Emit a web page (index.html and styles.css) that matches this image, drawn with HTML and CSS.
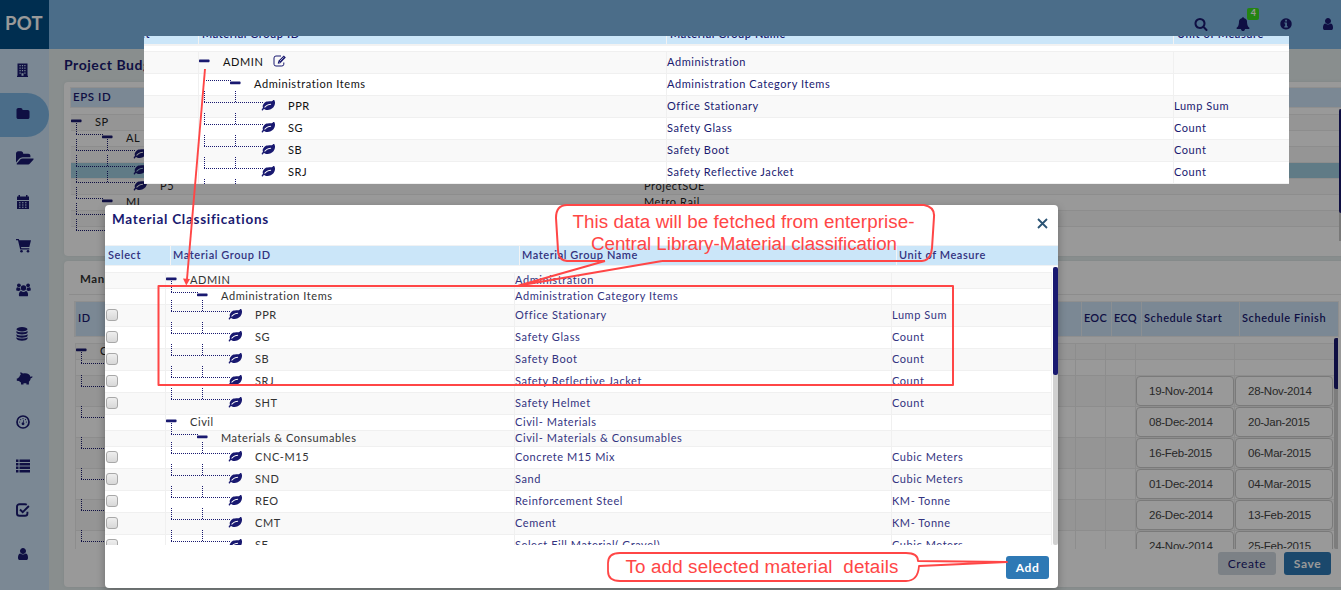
FILE: index.html
```html
<!DOCTYPE html>
<html lang="en">
<head>
<meta charset="utf-8">
<title>Project Budget</title>
<link rel="stylesheet" href="styles.css">
</head>
<body>
<svg class="defs" width="0" height="0">
  <symbol id="leafshape" viewBox="0 0 1792 1792"><path d="M1280 704q0-26-19-45t-45-19q-172 0-318 49.5t-259.500 134-235.500 219.5q-19 21-19 45 0 26 19 45t45 19q24 0 45-19 27-24 74-71t67-66q137-124 268.500-176t313.500-52q26 0 45-19t19-45zm512-198q0 95-20 193-46 224-184.500 383t-357.500 268q-214 108-438 108-148 0-286-47-15-5-88-42t-96-37q-16 0-39.500 32t-45 70-52.500 70-60 32q-43 0-63.500-17.500t-45.500-59.500q-2-4-6-11t-5.500-10-3-9.500-1.500-13.500q0-35 31-73.500t68-65.500 68-56 31-48q0-4-14-38t-16-44q-9-51-9-104 0-115 43.500-220t119-184.500 170.500-139 204-95.500q55-18 145-25.500t179.500-9 178.500-6 163.500-24 113.500-56.500l29.500-29.500 29.500-28 27-20 36.500-16 43.500-4.500q39 0 70.500 46t47.500 112 24 124 8 96z"/></symbol>
  <symbol id="l1" viewBox="0 0 80 22"><rect x="0" y="12.600" width="10.500" height="2.600" rx=".6"/></symbol>
  <symbol id="l2" viewBox="0 0 80 22"><path class="dots" d="M5.500 0V12M5 11.500H32"/><rect x="31" y="12.600" width="10.500" height="2.600" rx=".6"/></symbol>
  <symbol id="l3" viewBox="0 0 80 22"><path class="dots" d="M5.500 0V12M36.500 0V12M5 11.500H64"/><use href="#leafshape" x="62.500" y="8" width="13.500" height="13.500"/></symbol>
  <symbol id="l0" viewBox="0 0 80 22"><path class="dots" d="M5.500 0V12M5 11.500H80"/></symbol>
  <symbol id="user" viewBox="0 0 1792 1792"><path d="M1536 1399q0 109-62.500 187t-150.500 78h-854q-88 0-150.500-78t-62.500-187q0-85 8.500-160.500t31.500-152 58.500-131 94-89 134.500-34.500q131 128 313 128t313-128q76 0 134.500 34.500t94 89 58.500 131 31.500 152 8.500 160.500zm-256-887q0 159-112.500 271.500t-271.500 112.500-271.500-112.500-112.500-271.500 112.500-271.500 271.500-112.500 271.500 112.500 112.500 271.500z"/></symbol>
</svg>

<div class="app">
  <aside class="sidebar">
    <div class="logo">POT</div>
    <nav class="nav">
      <a class="item"><svg width="14" height="14" viewBox="0 0 14 14"><path fill-rule="evenodd" d="M1.500 .5h10v12.200h.5V14H1v-1.300h.5zM3.500 2v1.200h1.200V2zm2.400 0v1.200h1.200V2zm2.400 0v1.200h1.200V2zM3.500 4.500v1.200h1.200V4.500zm2.400 0v1.200h1.200V4.500zm2.400 0v1.200h1.200V4.500zM3.500 7v1.200h1.200V7zm2.400 0v1.200h1.200V7zm2.400 0v1.200h1.200V7zM3.500 9.500v1.200h1.200V9.500zm4.800 0v1.200h1.200V9.500zM5.500 10.200v2.500h2v-2.500z"/></svg></a>
      <a class="item active"><svg width="14" height="14" viewBox="0 0 1792 1792"><path d="M1728 608v704q0 92-66 158t-158 66h-1216q-92 0-158-66t-66-158v-960q0-92 66-158t158-66h320q92 0 158 66t66 158v32h672q92 0 158 66t66 158z"/></svg></a>
      <a class="item wide"><svg width="18" height="17" viewBox="0 0 1920 1792"><path d="M1879 952q0 31-31 66l-336 396q-43 51-120.500 86.500t-143.500 35.500h-1088q-34 0-60.500-13t-26.500-43q0-31 31-66l336-396q43-51 120.500-86.500t143.500-35.500h1088q34 0 60.500 13t26.500 43zm-343-344v160h-832q-94 0-197 47.500t-164 119.500l-337 396-5 6q0-4-.500-12.500t-.500-12.500v-960q0-92 66-158t158-66h320q92 0 158 66t66 158v32h544q92 0 158 66t66 158z"/></svg></a>
      <a class="item"><svg width="14" height="15" viewBox="0 0 14 15"><path fill-rule="evenodd" d="M1 1.500h1.500V0H4v1.500h6V0h1.500v1.500H13V5H1zM1 6h12v8H1zm2 1.300v1h1.500v-1zm3 0v1h1.500v-1zm3 0v1h1.500v-1zM3 9.500v1h1.500v-1zm3 0v1h1.500v-1zm3 0v1h1.500v-1zM3 11.700v1h1.500v-1zm3 0v1h1.500v-1zm3 0v1h1.500v-1z"/></svg></a>
      <a class="item"><svg width="15" height="14" viewBox="0 0 15 14"><path d="M0 0h2.800l.5 1.300H15L13.300 8H5l.3 1.200h8v1.300H4.200L2 1.300H0z"/><circle cx="5.500" cy="12.300" r="1.300"/><circle cx="12" cy="12.300" r="1.300"/></svg></a>
      <a class="item"><svg width="15" height="14" viewBox="0 0 15 14"><circle cx="7.500" cy="5" r="2.700"/><circle cx="2.900" cy="2.300" r="1.900"/><circle cx="12.100" cy="2.300" r="1.900"/><path d="M3.200 13.200c-.8-2 .2-5 1.900-5.200 1.500 1.200 3.300 1.200 4.800 0 1.700.2 2.700 3.200 1.900 5.200zM.3 7.500C0 5.500.5 4.300 1.500 4.200c.8.500 1.500.6 2.500.3 0 1 .2 1.700.7 2.400L2.800 8zM14.700 7.500c.3-2-.2-3.200-1.200-3.300-.8.500-1.500.6-2.500.3 0 1-.2 1.700-.7 2.400L12.200 8z"/></svg></a>
      <a class="item"><svg width="12" height="14" viewBox="0 0 12 14"><ellipse cx="6" cy="2.300" rx="5.500" ry="2.200"/><path d="M.5 3.700c1 2 10 2 11 0v2c-1 2.300-10 2.300-11 0zM.5 6.900c1 2 10 2 11 0v2c-1 2.300-10 2.300-11 0zM.5 10.100c1 2 10 2 11 0v1.700c-1 2.600-10 2.600-11 0z"/></svg></a>
      <a class="item"><svg width="17" height="13" viewBox="0 0 17 13"><path d="M1.500 6.500L3.300 5C3.600 4 4.300 3 4.800 2.500L4 .5C5.500.5 6.500 1 7 1.600 11 .7 14 2.500 14.600 5c.9.200 1-.8 1.700-.6.600.5-.3 1.700-1.600 1.800-.1 1.600-.8 2.600-1.800 3.500V12.600h-2.500v-1.400H7.500v1.400H5V10.500C4.200 10 3.500 9.500 3 9L.8 8.700V6.500z"/></svg></a>
      <a class="item"><svg width="14" height="14" viewBox="0 0 14 14"><circle cx="7" cy="7" r="6" fill="none" stroke="#191970" stroke-width="1.700"/><circle cx="7" cy="8.800" r="1.400"/><path d="M6.500 8.500L7.400 4.800l.5.200-.4 3.700z"/><circle cx="3.600" cy="7" r=".6"/><circle cx="4.700" cy="4.600" r=".6"/><circle cx="7" cy="3.600" r=".6"/><circle cx="9.500" cy="4.600" r=".6"/><circle cx="10.400" cy="7" r=".6"/></svg></a>
      <a class="item"><svg width="14" height="14" viewBox="0 0 14 14"><path d="M0 .5h2.500V3H0zM3.500.5H14V3H3.500zM0 4h2.500v2.500H0zM3.500 4H14v2.500H3.500zM0 7.500h2.500V10H0zM3.500 7.500H14V10H3.500zM0 11h2.500v2.500H0zM3.500 11H14v2.500H3.500z"/></svg></a>
      <a class="item"><svg width="14" height="14" viewBox="0 0 14 14"><path d="M10.800 1.700C10.300 1.400 9.800 1.200 9 1.200H3.500C2 1.200 1 2.200 1 3.500v7C1 12 2 12.800 3.500 12.800H9c1.500 0 2.400-.8 2.400-2.300V8.800M4 6.500l2.700 2.700L12.900 3" fill="none" stroke="#191970" stroke-width="1.900"/></svg></a>
      <a class="item"><svg width="14" height="14"><use href="#user"/></svg></a>
    </nav>
  </aside>

  <div class="body">
    <header class="topbar">
      <svg class="ic search" width="14" height="14" viewBox="0 0 1792 1792"><path d="M1216 832q0-185-131.500-316.500t-316.500-131.500-316.500 131.500-131.500 316.500 131.500 316.500 316.500 131.500 316.500-131.500 131.500-316.500zm512 832q0 52-38 90t-90 38q-54 0-90-38l-343-342q-179 124-399 124-143 0-273.500-55.500t-225-150-150-225-55.500-273.500 55.500-273.500 150-225 225-150 273.500-55.500 273.500 55.500 225 150 150 225 55.500 273.500q0 220-124 399l343 343q37 37 37 90z"/></svg>
      <span class="bell"><svg class="ic" width="14" height="14" viewBox="0 0 1792 1792"><path d="M1728 1408q0 52-38 90t-90 38h-448q0 106-75 181t-181 75-181-75-75-181h-448q-52 0-90-38t-38-90q50-42 91-88t85-119.500 74.500-158.500 50-206 19.500-260q0-152 117-282.500t307-158.500q-8-19-8-39 0-40 28-68t68-28 68 28 28 68q0 20-8 39 190 28 307 158.500t117 282.500q0 139 19.500 260t50 206 74.500 158.500 85 119.500 91 88z"/></svg><b class="badge">4</b></span>
      <svg class="ic" width="14" height="14" viewBox="0 0 14 14"><path fill-rule="evenodd" d="M7 1.200a5.700 5.700 0 1 0 .01 0zM6.200 2.800h1.700v1.600H6.200zM5.300 5.400h2.600v3.800h.9v1.300H5.300V9.200h.9V6.600h-.9z"/></svg>
      <svg class="ic" width="14" height="14"><use href="#user"/></svg>
    </header>

    <main class="main">
      <h1 class="title">Project Budget</h1>
      <section class="panel eps">
        <div class="ephead">EPS ID</div>
        <div class="eprows">
          <div class="er alt"><div class="tree"><svg><use href="#l1"/></svg><span class="t1">SP</span></div><div class="c"></div></div>
          <div class="er"><div class="tree"><svg><use href="#l2"/></svg><span class="t2">AL</span></div><div class="c"></div></div>
          <div class="er alt"><div class="tree"><svg><use href="#l3"/></svg></div><div class="c"></div></div>
          <div class="er sel"><div class="tree"><svg><use href="#l3"/></svg></div><div class="c"></div></div>
          <div class="er alt"><div class="tree"><svg><use href="#l3"/></svg><span class="t3">P5</span></div><div class="c">ProjectSOE</div></div>
          <div class="er"><div class="tree"><svg><use href="#l2"/></svg><span class="t2">ML</span></div><div class="c">Metro Rail</div></div>
          <div class="er alt"><div class="tree"><svg><use href="#l0"/></svg></div><div class="c"></div></div>
          <div class="er last"><div class="tree"><svg><use href="#l0"/></svg></div><div class="c"></div></div>
        </div>
        <div class="epscroll"><i></i></div>
      </section>

      <section class="panel man">
        <h2 class="tab">Manpower</h2>
        <div class="mtable">
          <div class="mhead"><span>ID</span><span>EOC</span><span>ECQ</span><span>Schedule Start</span><span>Schedule Finish</span></div>
          <div class="mwrap">
            <div class="mrows">
              <div class="mr short alt"><div class="tree"><svg><use href="#l1"/></svg><span class="t1">Civil</span></div><div></div><div></div><div></div><div></div></div>
              <div class="mr short"><div class="tree"><svg><use href="#l0"/></svg></div><div></div><div></div><div></div><div></div></div>
              <div class="mr alt"><div class="tree"><svg><use href="#l0"/></svg></div><div></div><div></div><div><span class="date">19-Nov-2014</span></div><div><span class="date">28-Nov-2014</span></div></div>
              <div class="mr"><div class="tree"><svg><use href="#l0"/></svg></div><div></div><div></div><div><span class="date">08-Dec-2014</span></div><div><span class="date">20-Jan-2015</span></div></div>
              <div class="mr alt"><div class="tree"><svg><use href="#l0"/></svg></div><div></div><div></div><div><span class="date">16-Feb-2015</span></div><div><span class="date">06-Mar-2015</span></div></div>
              <div class="mr"><div class="tree"><svg><use href="#l0"/></svg></div><div></div><div></div><div><span class="date">01-Dec-2014</span></div><div><span class="date">04-Mar-2015</span></div></div>
              <div class="mr alt"><div class="tree"><svg><use href="#l0"/></svg></div><div></div><div></div><div><span class="date">26-Dec-2014</span></div><div><span class="date">13-Feb-2015</span></div></div>
              <div class="mr"><div class="tree"><svg><use href="#l0"/></svg></div><div></div><div></div><div><span class="date">24-Nov-2014</span></div><div><span class="date">25-Feb-2015</span></div></div>
            </div>
            <div class="scroll m"><i></i></div>
          </div>
        </div>
        <div class="actions"><span class="btn create">Create</span><span class="btn save">Save</span></div>
      </section>
    </main>
  </div>
</div>
<div class="backdrop"></div>

<section class="library">
  <div class="lhead"><span>Select</span><span>Material Group ID</span><span>Material Group Name</span><span>Unit of Measure</span></div>
  <div class="lr alt"><div></div><div class="tree"><svg><use href="#l1"/></svg><span class="t1">ADMIN</span><svg class="edit" viewBox="0 0 13 12"><path d="M8 1H3Q1 1 1 3v6.200q0 1.800 2 1.800h5.800q2 0 2-1.800V7.500" fill="none" stroke="#191970" stroke-width="1"/><path d="M4.800 8.700l.4-2.600L10.800.5l2 2L7.300 8.200z"/><path d="M5.800 6.600l1.200 1.200M7 6l3.700-3.700" stroke="#fff" stroke-width=".6"/></svg></div><div>Administration</div><div></div></div>
  <div class="lr"><div></div><div class="tree"><svg><use href="#l2"/></svg><span class="t2">Administration Items</span></div><div>Administration Category Items</div><div></div></div>
  <div class="lr alt"><div></div><div class="tree"><svg><use href="#l3"/></svg><span class="t3">PPR</span></div><div>Office Stationary</div><div>Lump Sum</div></div>
  <div class="lr"><div></div><div class="tree"><svg><use href="#l3"/></svg><span class="t3">SG</span></div><div>Safety Glass</div><div>Count</div></div>
  <div class="lr alt"><div></div><div class="tree"><svg><use href="#l3"/></svg><span class="t3">SB</span></div><div>Safety Boot</div><div>Count</div></div>
  <div class="lr"><div></div><div class="tree"><svg><use href="#l3"/></svg><span class="t3">SRJ</span></div><div>Safety Reflective Jacket</div><div>Count</div></div>
  <div class="lr"><div></div><div class="tree"><svg><use href="#l3"/></svg></div><div></div><div></div></div>
</section>

<section class="modal">
  <div class="mtitle"><h2>Material Classifications</h2><svg class="close" width="11" height="11" viewBox="0 0 11 11"><path d="M1 1l9 9M10 1L1 10" stroke="#2b5474" stroke-width="1.800"/></svg></div>
  <div class="gh"><span>Select</span><span>Material Group ID</span><span>Material Group Name</span><span>Unit of Measure</span></div>
  <div class="gwrap">
    <div class="grows">
      <div class="gr short alt"><div></div><div class="tree"><svg><use href="#l1"/></svg><span class="t1">ADMIN</span></div><div>Administration</div><div></div></div>
      <div class="gr short"><div></div><div class="tree"><svg><use href="#l2"/></svg><span class="t2">Administration Items</span></div><div>Administration Category Items</div><div></div></div>
      <div class="gr alt"><div><i class="cb"></i></div><div class="tree"><svg><use href="#l3"/></svg><span class="t3">PPR</span></div><div>Office Stationary</div><div>Lump Sum</div></div>
      <div class="gr"><div><i class="cb"></i></div><div class="tree"><svg><use href="#l3"/></svg><span class="t3">SG</span></div><div>Safety Glass</div><div>Count</div></div>
      <div class="gr alt"><div><i class="cb"></i></div><div class="tree"><svg><use href="#l3"/></svg><span class="t3">SB</span></div><div>Safety Boot</div><div>Count</div></div>
      <div class="gr"><div><i class="cb"></i></div><div class="tree"><svg><use href="#l3"/></svg><span class="t3">SRJ</span></div><div>Safety Reflective Jacket</div><div>Count</div></div>
      <div class="gr alt"><div><i class="cb"></i></div><div class="tree"><svg><use href="#l3"/></svg><span class="t3">SHT</span></div><div>Safety Helmet</div><div>Count</div></div>
      <div class="gr short"><div></div><div class="tree"><svg><use href="#l1"/></svg><span class="t1">Civil</span></div><div>Civil- Materials</div><div></div></div>
      <div class="gr short alt"><div></div><div class="tree"><svg><use href="#l2"/></svg><span class="t2">Materials &amp; Consumables</span></div><div>Civil- Materials &amp; Consumables</div><div></div></div>
      <div class="gr"><div><i class="cb"></i></div><div class="tree"><svg><use href="#l3"/></svg><span class="t3">CNC-M15</span></div><div>Concrete M15 Mix</div><div>Cubic Meters</div></div>
      <div class="gr alt"><div><i class="cb"></i></div><div class="tree"><svg><use href="#l3"/></svg><span class="t3">SND</span></div><div>Sand</div><div>Cubic Meters</div></div>
      <div class="gr"><div><i class="cb"></i></div><div class="tree"><svg><use href="#l3"/></svg><span class="t3">REO</span></div><div>Reinforcement Steel</div><div>KM- Tonne</div></div>
      <div class="gr alt"><div><i class="cb"></i></div><div class="tree"><svg><use href="#l3"/></svg><span class="t3">CMT</span></div><div>Cement</div><div>KM- Tonne</div></div>
      <div class="gr"><div><i class="cb"></i></div><div class="tree"><svg><use href="#l3"/></svg><span class="t3">SF</span></div><div>Select Fill Material( Gravel)</div><div>Cubic Meters</div></div>
    </div>
    <div class="scroll"><i></i></div>
  </div>
  <div class="foot"><span class="btn add">Add</span></div>
</section>

<svg class="notes" width="1341" height="590" viewBox="0 0 1341 590">
  <g fill="none" stroke="#ff4646" stroke-width="2" stroke-linejoin="round">
    <path d="M205 69L187 279" stroke-width="1.900"/>
    <path d="M158.500 286H953V385H158.500Z"/>
    <path d="M605 261H567Q558 260 558 250L556 218Q556 205 567 205H924Q935 207 934 217L932 248Q931 260 922 261M662 261H922M605 261L519 285.500L662 261"/>
    <path d="M918 561Q918 553 906 553H620Q608 553 608 563V571Q608 581 620 581H906Q918 581 919 566L1007 562Z" stroke-width="1.800"/>
  </g>
  <path d="M183 278.500L190 279L186.300 285.500Z" fill="#ff4646"/>
  <g class="note">
    <text x="572.500" y="228" textLength="342">This data will be fetched from enterprise-</text>
    <text x="591" y="250" textLength="306">Central Library-Material classification</text>
    <text x="625.500" y="573" textLength="273" xml:space="preserve">To add selected material  details</text>
  </g>
</svg>
</body>
</html>
```
FILE: styles.css
```css
* { box-sizing: border-box; }
body {
  margin: 0;
  width: 1341px;
  height: 590px;
  overflow: hidden;
  position: relative;
  font: 11px/13px Lato, "Open Sans", sans-serif;
  letter-spacing: .57px;
  color: #191970;
  background: #e4eded;
}
svg { fill: #191970; display: block; }
h1, h2 { margin: 0; }
.defs { position: absolute; }
.dots { fill: none; stroke: #191970; stroke-width: 1; stroke-dasharray: 1 1; }

.app { display: flex; height: 590px; overflow: hidden; }
.sidebar { width: 49px; flex: none; background: #cde3f7; }
.logo {
  height: 49px;
  background: #004e85;
  color: #fff;
  font-size: 18.5px;
  font-weight: 700;
  line-height: 46px;
  padding-left: 5px;
  letter-spacing: .3px;
}
.item { display: flex; align-items: center; height: 44px; padding: 0 0 2px 16px; }
.item.active { background: #7db6e4; border-radius: 0 22px 22px 0; }

.body { flex: 1; min-width: 0; }
.topbar {
  height: 49px;
  background: #7db6e4;
  display: flex;
  justify-content: flex-end;
  gap: 28.300px;
  padding: 17px 6px 0 0;
}
.bell { position: relative; height: 14px; }
.badge {
  position: absolute;
  left: 11px;
  top: -9px;
  width: 12px;
  height: 12px;
  border-radius: 2px;
  background: #3cdc1e;
  color: #fff;
  font-size: 9px;
  line-height: 10px;
  text-align: center;
  letter-spacing: 0;
}
.main { padding: 0 0 0 15px; }
.title { height: 33px; font-size: 14px; line-height: 32px; letter-spacing: .55px; }
.panel { background: #fff; border-radius: 4px; width: 1290px; box-shadow: 0 0 3px #d5dede; }
.eps { height: 174px; padding: 6px 0 0 7px; position: relative; }
.ephead { height: 19px; background: #cde3f7; padding-left: 2px; line-height: 18px; font-weight: 600; margin-bottom: 7px; box-shadow: 0 0 0 1px #eee; font-size: 11.500px; }
.er { display: flex; height: 16px; border-top: 1px solid #ececec; background: #fff; }
.er.alt { background: #f8f8f8; }
.er.sel { background: #a0cddf; }
.er.last { height: 28px; background: none; }
.er .tree { width: 573px; }
.er span, .er .c { color: #222; }

.tree { position: relative; }
.tree > svg:first-child { position: absolute; left: 0; top: -8px; width: 80px; height: 22px; }
.t1 { margin-left: 24px; }
.t2 { margin-left: 55px; }
.t3 { margin-left: 89px; }
.epscroll { position: absolute; left: 1275px; top: 27px; width: 5px; height: 132px; background: #c8c8c8; }
.epscroll i { display: block; height: 104px; background: #191970; border-radius: 2px; }

.man { margin-top: 5px; height: 326px; }
.tab { height: 34px; margin-left: 5px; padding-left: 11px; font-size: 11.5px; line-height: 36px; border-bottom: 1px solid #eaeaea; color: #333; }
.mtable { margin: 7px 0 0 11px; width: 1263px; }
.mhead { display: grid; grid-template-columns: 1006px 30px 30px 98px 1fr; height: 34px; line-height: 32px; background: #cde3f7; font-weight: 600; box-shadow: 0 0 0 1px #eee; }
.mhead span { padding-left: 2px; border-left: 1px solid #e8eef4; white-space: nowrap; }
.mhead span:nth-child(2), .mhead span:nth-child(3) { letter-spacing: .2px; }
.mwrap { display: flex; height: 213px; padding-top: 2px; overflow: hidden; }
.mrows { padding-top: 5px; width: 1259px; flex: none; }
.mr { display: grid; grid-template-columns: 1000px 30px 30px 99px 99px; height: 31px; border-top: 1px solid #ececec; background: #fff; }
.mr.short { height: 16px; }
.mr.alt { background: #f8f8f8; }
.mr > div { border-left: 1px solid #ececec; }
.mr .tree > svg { top: -1px; }
.mr.short .tree > svg { top: -8px; }
.mr .t1 { color: #222; }
.date {
  display: block;
  width: 98px;
  height: 30px;
  border: 1px solid #ccc;
  border-radius: 4px;
  background: #fff;
  color: #444;
  font: 11.500px/28px "Liberation Sans", Arial, sans-serif;
  letter-spacing: -.26px;
  padding-left: 12px;
}
.scroll { width: 5px; flex: none; background: #d0d0d0; border-radius: 2px; }
.scroll i { display: block; height: 108px; background: #191970; border-radius: 2px; }
.scroll.m i { height: 51px; }
.actions { display: flex; gap: 8px; margin: 3px 0 0 1154px; }
.btn { display: block; height: 23px; border-radius: 3px; text-align: center; line-height: 23px; font-size: 12px; }
.create { width: 58px; background: #cfd8df; }
.save { width: 47px; background: #2e79b5; color: #fff; font-weight: 700; }

.backdrop { position: absolute; inset: 0; background: rgba(0, 0, 0, .4); }

.library { position: absolute; left: 144px; top: 36px; width: 1145px; height: 148px; overflow: hidden; background: #fff; }
.lhead, .lr { display: grid; grid-template-columns: 54px 468px 507px 1fr; }
.lhead { height: 10px; background: #cbe6f9; border-bottom: 2px solid #f2f2f2; margin-bottom: 5px; font-weight: 600; }
.lhead span { height: 8px; border-left: 1px solid #f2f2f2; padding-left: 3px; line-height: 15px; display: flex; align-items: flex-end; padding-bottom: 3px; overflow: hidden; }
.lhead span:first-child { margin-left: -30px; border: 0; }
.lr { height: 22px; border-top: 1px solid #f0f0f0; line-height: 19px; }
.lr > div + div { border-left: 1px solid #f0f0f0; }
.lr.alt, .gr.alt { background: #f9f9f9; }
.lr .tree > svg:first-child, .gr .tree > svg:first-child { top: -5px; }
.lr .tree, .gr .tree { color: #111; }
.lr .tree { display: flex; }
.edit { width: 13px; height: 12px; margin: 3px 0 0 10px; }

.modal { position: absolute; left: 105px; top: 205px; width: 953px; height: 383px; background: #fff; border-radius: 4px; box-shadow: 0 3px 9px rgba(0, 0, 0, .3); }
.mtitle { height: 41px; display: flex; justify-content: space-between; padding: 5px 10px 0 7px; }
.mtitle h2 { font-size: 13.500px; line-height: 18px; letter-spacing: .74px; }
.close { margin-top: 8px; }
.gh { display: grid; grid-template-columns: 65px 349px 377px 1fr; height: 19px; line-height: 18px; margin-bottom: 2px; background: #cbe6f9; font-weight: 600; box-shadow: 0 1px 0 #f0f2f4, 0 -1px 0 #f0f2f4; color: #33337f; }
.gh span { padding-left: 2px; }
.gh span:first-child { padding-left: 3px; }
.gh span + span { border-left: 1px solid #f4f4f4; }
.gwrap { display: flex; height: 278px; overflow: hidden; justify-content: space-between; }
.grows { width: 947px; padding-top: 5px; }
.gr { display: grid; grid-template-columns: 61px 349px 377px 1fr; height: 22px; line-height: 19px; border-top: 1px solid #f0f0f0; background: #fff; color: #33337f; }
.gr > div { border-right: 1px solid #f0f0f0; white-space: nowrap; }
.gr > div:first-child { padding-left: 1px; }
.gr .tree { color: #333; }
.gr.short { height: 16px; line-height: 13px; }
.gr.short .tree > svg:first-child { top: -8px; }
.cb { display: block; width: 12px; height: 12px; margin-top: 4px; border: 1px solid #a8a8a8; border-radius: 3px; background: linear-gradient(#eee, #d8d8d8); }
.foot { padding: 11px 9px 0 0; display: flex; justify-content: flex-end; }
.add { width: 43px; background: #2e79b5; color: #fff; font-weight: 700; }

.notes { position: absolute; inset: 0; }
.note { fill: #ff4646; font: 18.800px "Liberation Sans", Arial, sans-serif; letter-spacing: 0; }
```
